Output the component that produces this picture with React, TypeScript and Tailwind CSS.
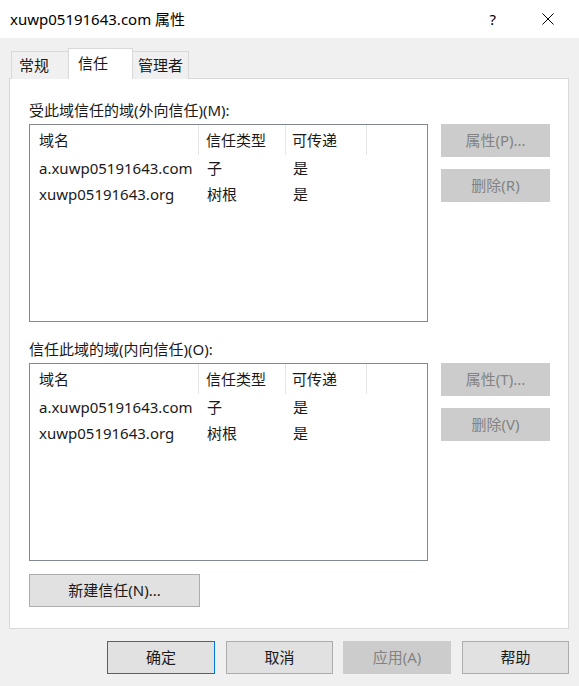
import React from "react";

type Row = { name: string; type: string; transitive: string };

const rows: Row[] = [
  { name: "a.xuwp05191643.com", type: "子", transitive: "是" },
  { name: "xuwp05191643.org", type: "树根", transitive: "是" },
];

const font = "font-['Segoe_UI','Noto_Sans','Noto_Sans_CJK_SC',sans-serif]";

const WinButton: React.FC<{ label: string; disabled?: boolean; primary?: boolean; className?: string }> = ({
  label,
  disabled,
  primary,
  className = "",
}) => (
  <button
    className={`h-[33px] flex items-center justify-center text-[15px] border ${
      disabled
        ? "bg-[#cccccc] border-[#cccccc] text-[#838383]"
        : primary
        ? "bg-[#e1e1e1] border-[#0078d7] text-[#1a1a1a]"
        : "bg-[#e1e1e1] border-[#adadad] text-[#1a1a1a]"
    } ${className}`}
  >
    {label}
  </button>
);

const TrustList: React.FC = () => (
  <div className="w-[399px] h-[198px] border border-[#828790] bg-white">
    <div className="flex h-[30px] items-center text-[15px] text-[#1a1a1a]">
      <div className="w-[169px] h-full flex items-center pl-[9px] border-r border-[#e5e5e5]">域名</div>
      <div className="w-[87px] h-full flex items-center pl-[7px] border-r border-[#e5e5e5]">信任类型</div>
      <div className="w-[81px] h-full flex items-center pl-[6px] border-r border-[#e5e5e5]">可传递</div>
    </div>
    {rows.map((r) => (
      <div key={r.name} className="flex h-[26px] items-center text-[15px] leading-[20px] text-[#1a1a1a]">
        <div className="w-[169px] pl-[9px]">{r.name}</div>
        <div className="w-[87px] pl-[8px]">{r.type}</div>
        <div className="w-[81px] pl-[7px]">{r.transitive}</div>
      </div>
    ))}
  </div>
);

const Section: React.FC<{ label: string; prop: string; del: string }> = ({ label, prop, del }) => (
  <div className="flex flex-col">
    <div className="text-[15px] text-[#1a1a1a] leading-[20px] mb-[4px]">{label}</div>
    <div className="flex">
      <TrustList />
      <div className="flex flex-col gap-[12px] ml-[13px]">
        <WinButton label={prop} disabled className="w-[109px]" />
        <WinButton label={del} disabled className="w-[109px]" />
      </div>
    </div>
  </div>
);

export default function App() {
  return (
    <div className={`w-[579px] h-[686px] bg-[#f0f0f0] flex flex-col ${font}`}>
      <div className="h-[38px] bg-white flex items-center pl-[10px] shrink-0">
        <span className="text-[15px] text-black">xuwp05191643.com 属性</span>
        <span className="ml-auto text-[15px] text-black mr-[46px]">?</span>
        <svg width="12" height="12" viewBox="0 0 12 12" className="mr-[25px]">
          <path d="M0.5 0.5L11.5 11.5M11.5 0.5L0.5 11.5" stroke="#000" strokeWidth="1" />
        </svg>
      </div>

      <div className="flex items-end pl-[11px] mt-[10px] h-[30px] relative z-10">
        <div className="h-[28px] w-[58px] border border-b-0 border-[#d9d9d9] bg-[#f0f0f0] flex items-center pl-[7px] text-[15px] text-[#1a1a1a] -mb-px">
          常规
        </div>
        <div className="h-[31px] w-[65px] bg-white border border-b-0 border-[#d9d9d9] flex items-start pt-[3px] pl-[9px] text-[15px] text-[#1a1a1a] -mb-px -ml-px">
          信任
        </div>
        <div className="h-[28px] w-[57px] border border-b-0 border-[#d9d9d9] bg-[#f0f0f0] flex items-center pl-[5px] text-[15px] text-[#1a1a1a] -mb-px -ml-px">
          管理者
        </div>
      </div>

      <div className="mx-[9px] w-[560px] h-[551px] bg-white border border-[#d9d9d9] pl-[19px] pt-[21px] flex flex-col">
        <Section label="受此域信任的域(外向信任)(M):" prop="属性(P)..." del="删除(R)" />
        <div className="mt-[17px]">
          <Section label="信任此域的域(内向信任)(O):" prop="属性(T)..." del="删除(V)" />
        </div>
        <WinButton label="新建信任(N)..." className="w-[171px] mt-[13px]" />
      </div>

      <div className="flex justify-end pr-[10px] mt-[12px]">
        <WinButton label="确定" primary className="w-[108px]" />
        <WinButton label="取消" className="w-[107px] ml-[11px]" />
        <WinButton label="应用(A)" disabled className="w-[108px] ml-[10px]" />
        <WinButton label="帮助" className="w-[107px] ml-[11px]" />
      </div>
    </div>
  );
}
